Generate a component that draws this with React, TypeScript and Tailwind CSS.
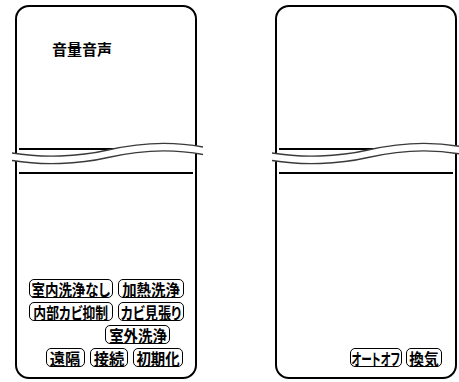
import React from 'react'

const jp = "[font-family:'Noto_Sans_CJK_JP',sans-serif] [font-feature-settings:'palt']"

function Key({ label, className, fit }: { label: string; className: string; fit: string }) {
  return (
    <span
      className={`flex h-[19px] shrink-0 items-center justify-center whitespace-nowrap rounded-[5px] border-[1.5px] border-black text-black ${className}`}
    >
      <span className={`inline-block text-[16px] font-bold leading-none ${fit}`}>{label}</span>
    </span>
  )
}

// break mark drawn over the panel body
function Break() {
  return (
    <svg
      className="pointer-events-none absolute left-[-8px] top-[128px] overflow-visible"
      width="200"
      height="40"
      viewBox="0 0 200 40"
    >
      <path
        d="M3,18 C33,23 69,22 99,15 S163,6 194,12 L194,19.5 C163,13.5 129,15.5 99,22.5 C69,29.5 33,30.5 3,25.5 Z"
        fill="#fff"
      />
      <path d="M3,18 C33,23 69,22 99,15 S163,6 194,12" fill="none" stroke="#3a3a3a" strokeWidth="1.3" />
      <path d="M3,25.5 C33,30.5 69,29.5 99,22.5 S163,13.5 194,19.5" fill="none" stroke="#3a3a3a" strokeWidth="1.3" />
    </svg>
  )
}

function Panel({ title, children }: { title?: string; children: React.ReactNode }) {
  return (
    <div className="relative flex h-[374px] w-[182px] flex-col rounded-[14px] border-2 border-black bg-white">
      <div className="h-[49px] pl-[35px] pt-[34px]">
        {title && <p className="text-[15px] font-bold leading-none text-black">{title}</p>}
      </div>
      <div className="mx-[2px] mt-[92px] h-[2px] bg-black" />
      <div className="mx-[2px] mt-[22px] h-[2px] bg-black" />
      <Break />
      <div className="mt-auto flex flex-col gap-[4px] pb-[10px]">{children}</div>
    </div>
  )
}

export default function App() {
  return (
    <div className={`flex h-[382px] w-[459px] gap-[78px] bg-white pl-[15px] pt-[5px] ${jp}`}>
      <Panel title="音量音声">
        <div className="flex gap-[5px] pl-[12px]">
          <Key label="室内洗浄なし" className="w-[84px]" fit="[transform:scaleX(0.84)]" />
          <Key label="加熱洗浄" className="w-[66px]" fit="[transform:scaleX(0.9)]" />
        </div>
        <div className="flex gap-[5px] pl-[12px]">
          <Key label="内部カビ抑制" className="w-[84px]" fit="[transform:scaleX(0.8)]" />
          <Key label="カビ見張り" className="w-[66px]" fit="[transform:scaleX(0.82)]" />
        </div>
        <div className="flex pl-[88px]">
          <Key label="室外洗浄" className="w-[65px]" fit="[transform:scaleX(0.9)]" />
        </div>
        <div className="flex gap-[5px] pl-[29px]">
          <Key label="遠隔" className="w-[39px]" fit="[transform:scaleX(0.95)]" />
          <Key label="接続" className="w-[38px]" fit="[transform:scaleX(0.95)]" />
          <Key label="初期化" className="w-[50px]" fit="[transform:scaleX(0.9)]" />
        </div>
      </Panel>
      <Panel>
        <div className="flex gap-[4px] pl-[73px]">
          <Key label="オートオフ" className="w-[52px]" fit="[transform:scaleX(0.66)]" />
          <Key label="換気" className="w-[36px]" fit="[transform:scaleX(0.92)]" />
        </div>
      </Panel>
    </div>
  )
}
